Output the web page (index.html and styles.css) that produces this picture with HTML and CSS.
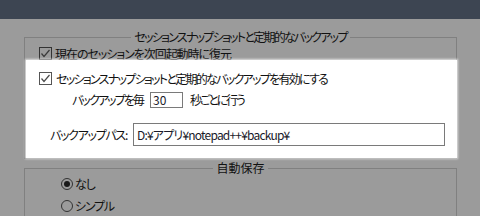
FILE: index.html
```html
<!DOCTYPE html>
<html lang="ja">
<head>
  <meta charset="UTF-8">
  <title>バックアップ設定</title>
  <link rel="stylesheet" href="styles.css">
</head>
<body>
  <div class="titlebar"></div>

  <!-- Session snapshot group -->
  <fieldset class="group group-backup">
    <legend class="legend-backup">セッションスナップショットと定期的なバックアップ</legend>
    <label class="check-row row-restore">
      <span class="check"><svg width="13" height="13" viewBox="0 0 13 13"><polyline points="2.5,6.5 5,9.5 10.5,3" fill="none" stroke="#3a3a3a" stroke-width="1.2"/></svg></span>
      <span class="txt-restore">現在のセッションを次回起動時に復元</span>
    </label>

    <div class="highlight">
      <label class="check-row row-enable">
        <span class="check check-light"><svg width="13" height="13" viewBox="0 0 13 13"><polyline points="2.5,6.5 5,9.5 10.5,3" fill="none" stroke="#4a4a4a" stroke-width="1.2"/></svg></span>
        <span class="txt-enable">セッションスナップショットと定期的なバックアップを有効にする</span>
      </label>
      <div class="field-row row-interval">
        <span class="txt-every">バックアップを毎</span>
        <span class="edit edit-small">30</span>
        <span class="txt-sec">秒ごとに行う</span>
      </div>
      <div class="field-row row-path">
        <span class="txt-path">バックアップパス:</span>
        <span class="edit edit-path">D:¥アプリ¥notepad++¥backup¥</span>
      </div>
    </div>
  </fieldset>

  <!-- Auto save group -->
  <fieldset class="group group-autosave">
    <legend>自動保存</legend>
    <label class="radio-row row-none"><span class="radio checked"></span><span class="txt-none">なし</span></label>
    <label class="radio-row row-simple"><span class="radio"></span><span class="txt-simple">シンプル</span></label>
  </fieldset>
</body>
</html>
```

FILE: styles.css
```css
* { margin: 0; padding: 0; box-sizing: border-box; }
html, body { width: 480px; height: 216px; overflow: hidden; }
body {
  background: #9b9b9b;
  color: #111;
  font-family: "Noto Sans CJK JP", sans-serif;
  font-size: 12px;
  line-height: 16px;
  font-feature-settings: "palt";
  white-space: nowrap;
}

.titlebar { height: 19px; background: #3d4552; }

.group {
  border: 1px solid #808080;
  margin: 0 23px 0 24px;
  padding: 0;
  min-width: 0;
}
.group legend {
  margin: 0 auto;
  padding: 0 3px;
  line-height: 16px;
}
.group-backup { margin-top: 10px; }

/* Meiryo UI kana are much narrower than Noto's, so tighten per label */
.legend-backup { letter-spacing: -1.75px; }
.txt-restore { letter-spacing: -1.05px; }
.txt-enable { letter-spacing: -1.72px; }
.txt-every { letter-spacing: -1.9px; }
.txt-sec { letter-spacing: -2.2px; }
.txt-path { letter-spacing: -1.3px; }
.txt-simple { letter-spacing: -1.2px; }
.txt-none { letter-spacing: -1px; }

.check-row, .radio-row {
  display: flex;
  align-items: center;
  height: 13px;
}
.check {
  width: 13px;
  height: 13px;
  border: 1px solid #333;
  display: inline-flex;
  margin-right: 3px;
}
.check svg { margin: -1px; }
.check-light { border-color: #555; background: #fff; margin-right: 4px; }

.row-restore { margin: 2px 0 0 14px; }

.highlight {
  background: #fff;
  margin: 0 -1px 0 1px;
  padding: 12px 0;
  box-shadow: 0 0 2px 1px rgba(255,255,255,0.7);
  position: relative;
}
.row-enable { margin-left: 13px; }

.field-row { display: flex; align-items: center; }
.row-interval { margin: 7px 0 0 46px; height: 16px; }
.row-path { margin: 15px 0 0 24px; height: 23px; }

.edit {
  border: 1px solid #7a7a7a;
  background: #fff;
  color: #1a1a2a;
  display: flex;
  align-items: center;
  padding-left: 2px;
}
.edit-small { width: 33px; height: 16px; margin: 0 7px; }
.edit-path {
  width: 312px;
  height: 23px;
  margin-left: 6px;
  padding-left: 3px;
  letter-spacing: -0.8px;
}

.group-autosave { margin-top: 1px; height: 80px; }
.radio-row { height: 12px; margin-left: 36px; }
.row-none { margin-top: 2px; }
.row-simple { margin-top: 10px; }
.radio {
  width: 12px;
  height: 12px;
  border: 1px solid #333;
  border-radius: 50%;
  margin-right: 2px;
  display: inline-flex;
  align-items: center;
  justify-content: center;
}
.radio.checked::after {
  content: "";
  width: 6px;
  height: 6px;
  border-radius: 50%;
  background: #1a1a1a;
}
```
